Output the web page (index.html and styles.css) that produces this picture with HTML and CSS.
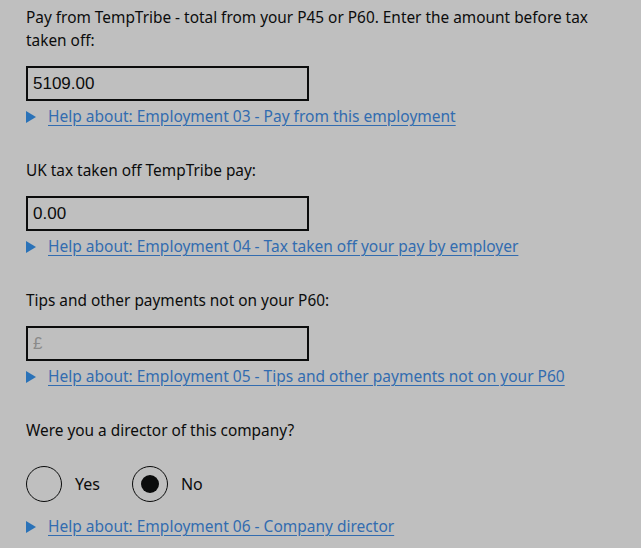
FILE: index.html
```html
<!DOCTYPE html>
<html lang="en">
<head>
<meta charset="utf-8">
<title>Employment</title>
<link rel="stylesheet" href="styles.css">
</head>
<body>
<form class="page">
  <div class="field">
    <label class="label" for="pay">Pay from TempTribe - total from your P45 or P60. Enter the amount before tax taken off:</label>
    <input class="input" id="pay" type="text" value="5109.00">
    <a class="help" href="#"><span class="tri"></span><span class="help-text">Help about: Employment 03 - Pay from this employment</span></a>
  </div>
  <div class="field">
    <label class="label" for="tax">UK tax taken off TempTribe pay:</label>
    <input class="input" id="tax" type="text" value="0.00">
    <a class="help" href="#"><span class="tri"></span><span class="help-text">Help about: Employment 04 - Tax taken off your pay by employer</span></a>
  </div>
  <div class="field">
    <label class="label" for="tips">Tips and other payments not on your P60:</label>
    <input class="input" id="tips" type="text" placeholder="£">
    <a class="help" href="#"><span class="tri"></span><span class="help-text">Help about: Employment 05 - Tips and other payments not on your P60</span></a>
  </div>
  <div class="field">
    <div class="label">Were you a director of this company?</div>
    <div class="radios">
      <label class="radio"><span class="circle"></span><span class="radio-text">Yes</span></label>
      <label class="radio"><span class="circle checked"></span><span class="radio-text">No</span></label>
    </div>
    <a class="help help-last" href="#"><span class="tri"></span><span class="help-text">Help about: Employment 06 - Company director</span></a>
  </div>
</form>
</body>
</html>
```

FILE: styles.css
```css
html, body {
  margin: 0;
  padding: 0;
  background: #bfbfbf;
}
.page {
  padding: 6px 28px 0 26px;
  font-family: "Noto Sans", "Liberation Sans", Arial, sans-serif;
  font-size: 15.4px;
  color: #0b0c0c;
}
.field {
  display: flex;
  flex-direction: column;
  align-items: flex-start;
  margin-bottom: 31px;
}
.label {
  display: block;
  line-height: 23px;
  margin-bottom: 13px;
}
.input {
  box-sizing: border-box;
  width: 283px;
  height: 35px;
  margin-top: 1px;
  border: 2px solid #0b0c0c;
  background: transparent;
  padding: 0 5px;
  font-family: "Liberation Sans", Arial, sans-serif;
  font-size: 17px;
  color: #0b0c0c;
  outline: none;
}
.input::placeholder {
  color: #8a8a8a;
}
.help {
  display: flex;
  align-items: center;
  margin-top: 4px;
  line-height: 23px;
  font-size: 15.5px;
  color: #326cb0;
  text-decoration: none;
}
.tri {
  width: 0;
  height: 0;
  border-top: 6px solid transparent;
  border-bottom: 6px solid transparent;
  border-left: 10px solid #2a72b8;
  margin-right: 12px;
}
.help-text {
  text-decoration: underline;
  text-underline-offset: 3px;
}
.radios {
  display: flex;
  gap: 32px;
  margin-top: 11px;
}
.radio {
  display: flex;
  align-items: center;
  gap: 13px;
  font-size: 16px;
}
.circle {
  box-sizing: border-box;
  width: 36px;
  height: 36px;
  border: 1.5px solid #0b0c0c;
  border-radius: 50%;
  display: flex;
  align-items: center;
  justify-content: center;
}
.circle.checked::after {
  content: "";
  width: 18px;
  height: 18px;
  border-radius: 50%;
  background: #0b0c0c;
}
.help-last {
  margin-top: 13px;
}
```
